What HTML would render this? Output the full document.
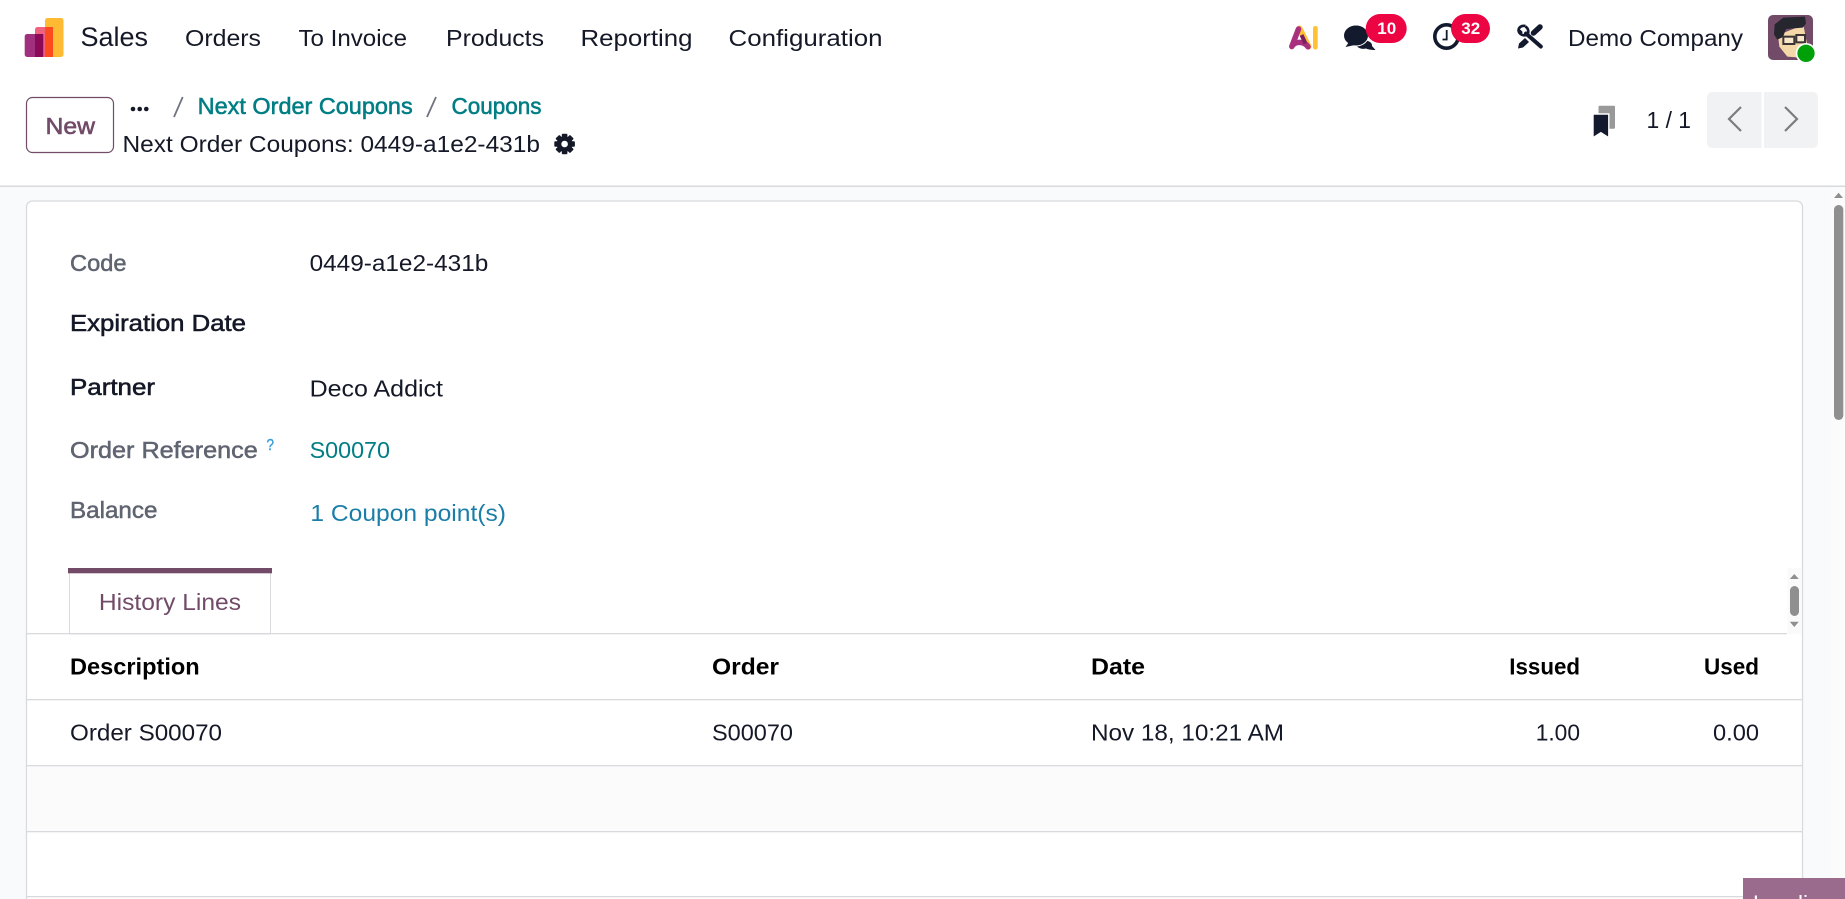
<!DOCTYPE html>
<html lang="en">
<head>
<meta charset="utf-8">
<title>Next Order Coupons: 0449-a1e2-431b</title>
<style>
html,body{margin:0;padding:0;width:1845px;height:899px;overflow:hidden;background:#f9fafb}
svg{position:absolute;left:0;top:0;display:block}
text{font-family:"Liberation Sans",sans-serif;font-size:23px;fill:#141827}
.b{stroke:#141827;stroke-width:.55px}
.g{fill:#5f6470;stroke:#5f6470;stroke-width:.5px}
.t{fill:#017e84}
.bt{fill:#017e84;stroke:#017e84;stroke-width:.55px}
.n{fill:#714B67;stroke:#714B67;stroke-width:.6px}
.k{fill:#000;font-weight:700}
</style>
</head>
<body>
<svg width="1845" height="899" viewBox="0 0 1845 899" xmlns="http://www.w3.org/2000/svg">
  <!-- backgrounds -->
  <rect x="0" y="0" width="1845" height="186" fill="#fff"/>
  <rect x="0" y="185.5" width="1845" height="1.5" fill="#d8dadd"/>
  <rect x="1831" y="187" width="14" height="712" fill="#fbfbfb"/>

  <!-- logo -->
  <rect x="45" y="18" width="18.5" height="39" rx="2.5" fill="#FFBA33"/>
  <rect x="35" y="27" width="18" height="30" rx="2.5" fill="#F0617F"/>
  <rect x="45" y="27" width="8" height="30" fill="#FB4B1F"/>
  <rect x="24.7" y="34" width="18.5" height="23" rx="2.5" fill="#A0307D"/>
  <rect x="35" y="34" width="8.2" height="23" fill="#8B0A56"/>

  <!-- nav -->
  <text x="80.5" y="46" style="font-size:27px" textLength="67.5" lengthAdjust="spacingAndGlyphs">Sales</text>
  <text x="185" y="46" textLength="76" lengthAdjust="spacingAndGlyphs">Orders</text>
  <text x="298.5" y="46" textLength="108.5" lengthAdjust="spacingAndGlyphs">To Invoice</text>
  <text x="446" y="46" textLength="98" lengthAdjust="spacingAndGlyphs">Products</text>
  <text x="580.5" y="46" textLength="112" lengthAdjust="spacingAndGlyphs">Reporting</text>
  <text x="728.5" y="46" textLength="154" lengthAdjust="spacingAndGlyphs">Configuration</text>

  <!-- AI logo -->
  <path d="M1299.5 28.5 L1308.5 46.500" stroke="#FFC233" stroke-width="6" stroke-linecap="round" fill="none"/>
  <path d="M1298.500 29 L1291.800 46.500 C1295 41 1304 41 1308 46.800" stroke="#A8307D" stroke-width="5.500" stroke-linecap="round" stroke-linejoin="round" fill="none"/>
  <path d="M1301.500 35 L1305.500 43.500" stroke="#7a1f5f" stroke-width="4" fill="none"/>
  <rect x="1313" y="26" width="4.7" height="23.5" rx="2.2" fill="#FFC233"/>

  <!-- chat -->
  <path d="M1354 41 C1362 38 1373 41 1372 46 L1375.500 50 C1371 50 1368 49.500 1366 48.500 C1361 50 1355 47 1354 41 Z" fill="#141a2e"/>
  <ellipse cx="1356" cy="35.500" rx="12.500" ry="10.500" fill="#141a2e" stroke="#fff" stroke-width="1"/>
  <path d="M1349 42 L1345.500 47 L1355 45 Z" fill="#141a2e"/>
  <rect x="1365.700" y="14" width="41" height="29" rx="14.500" fill="#EC0443"/>
  <text x="1386.700" y="34" text-anchor="middle" style="font-size:17px;fill:#fff;font-weight:700">10</text>

  <!-- clock -->
  <circle cx="1446.500" cy="36.500" r="11.700" fill="none" stroke="#141a2e" stroke-width="3.600"/>
  <path d="M1446.700 30 V39.500 H1442.500" fill="none" stroke="#141a2e" stroke-width="1.800"/>
  <rect x="1451" y="14" width="39" height="29" rx="14.500" fill="#EC0443"/>
  <text x="1470.700" y="34" text-anchor="middle" style="font-size:17px;fill:#fff;font-weight:700">32</text>

  <!-- tools -->
  <path d="M1526 33.500 L1540.800 46.500" stroke="#141a2e" stroke-width="4" stroke-linecap="round" fill="none"/>
  <path d="M1525.500 26 C1521.500 25 1518.500 27.500 1518.500 30.500 L1521.800 33 L1519.500 30.500 M1518.500 30.500 C1519 34.500 1524 36.500 1527.500 34.500 C1529 32 1528.500 28.500 1525.500 26.500" stroke="#141a2e" stroke-width="2.600" fill="none"/>
  <path d="M1533.500 33 L1540 27" stroke="#141a2e" stroke-width="5.500" stroke-linecap="round" fill="none"/>
  <path d="M1525 38 L1529 42 L1523 47.500 L1518 48.500 L1519 43.500 Z" fill="#141a2e"/>

  <text x="1568" y="46" textLength="175" lengthAdjust="spacingAndGlyphs">Demo Company</text>

  <!-- avatar -->
  <g transform="translate(1750 5) scale(.33333)">
    <rect x="54" y="30" width="135" height="135" rx="15" fill="#714B67"/>
    <path d="M84 90 L160 60 L172 120 L150 158 L112 155 L88 125 Z" fill="#f5d8a8"/>
    <path d="M72 88 L74 58 L100 38 L165 35 L168 56 L158 68 L108 72 L99 96 L82 104 Z" fill="#26262f"/>
    <rect x="100" y="95" width="33" height="22" fill="#f8e6c8" stroke="#3b3436" stroke-width="6"/>
    <rect x="139" y="90" width="26" height="22" fill="#f8e6c8" stroke="#3b3436" stroke-width="6"/>
    <circle cx="168" cy="145" r="31" fill="#fff"/>
    <circle cx="168" cy="145" r="26" fill="#00A009"/>
  </g>

  <!-- control panel -->
  <rect x="26.500" y="97.500" width="87" height="55" rx="6" fill="#fff" stroke="#714B67" stroke-width="1.200"/>
  <text x="45.500" y="134" class="n" textLength="49.500" lengthAdjust="spacingAndGlyphs">New</text>
  <circle cx="133" cy="109" r="2.300" fill="#141827"/><circle cx="139.700" cy="109" r="2.300" fill="#141827"/><circle cx="146.300" cy="109" r="2.300" fill="#141827"/>
  <path d="M182.700 97 L174 117 M436 97 L427 117" stroke="#6f7480" stroke-width="1.800" fill="none"/>
  <text x="197.700" y="114" class="bt" textLength="215" lengthAdjust="spacingAndGlyphs">Next Order Coupons</text>
  <text x="451.500" y="114" class="bt" textLength="90" lengthAdjust="spacingAndGlyphs">Coupons</text>
  <text x="122.500" y="152" textLength="417.500" lengthAdjust="spacingAndGlyphs">Next Order Coupons: 0449-a1e2-431b</text>

  <!-- gear -->
  <g transform="translate(564.600 144)" fill="#141827">
    <rect x="-2.800" y="-10.300" width="5.600" height="20.600" rx="1"/>
    <rect x="-2.800" y="-10.300" width="5.600" height="20.600" rx="1" transform="rotate(45)"/>
    <rect x="-2.800" y="-10.300" width="5.600" height="20.600" rx="1" transform="rotate(90)"/>
    <rect x="-2.800" y="-10.300" width="5.600" height="20.600" rx="1" transform="rotate(135)"/>
    <circle r="7.800"/>
    <circle r="3.300" fill="#fff"/>
  </g>

  <!-- bookmarks -->
  <rect x="1598.500" y="105.700" width="16.500" height="23" rx="1" fill="#999"/>
  <path d="M1593 114 H1608.800 V137.700 L1600.900 132.700 L1593 137.700 Z" fill="#141a2e" stroke="#fff" stroke-width="1.400"/>

  <text x="1646.500" y="128" textLength="44.500" lengthAdjust="spacingAndGlyphs">1 / 1</text>

  <!-- pager -->
  <path d="M1712 92 H1761.500 V148 H1712 a5 5 0 0 1 -5 -5 V97 a5 5 0 0 1 5 -5 Z" fill="#f1f2f4"/>
  <path d="M1764 92 H1813 a5 5 0 0 1 5 5 V143 a5 5 0 0 1 -5 5 H1764 Z" fill="#f1f2f4"/>
  <path d="M1741 107 L1729 119 L1741 131 M1785 107 L1797 119 L1785 131" fill="none" stroke="#7d7d7d" stroke-width="2.200"/>

  <!-- page scrollbar -->
  <path d="M1838.600 192.700 L1843 198 H1834 Z" fill="#8f8f8f"/>
  <rect x="1834" y="205" width="9.300" height="215" rx="4.600" fill="#8f8f8f"/>

  <!-- card -->
  <path d="M26.500 899 V207 a6 6 0 0 1 6 -6 H1796.500 a6 6 0 0 1 6 6 V899" fill="#fff" stroke="#d8dadd" stroke-width="1.300"/>

  <!-- form -->
  <text x="70" y="271" class="g" textLength="56.500" lengthAdjust="spacingAndGlyphs">Code</text>
  <text x="309.600" y="271" textLength="178.700" lengthAdjust="spacingAndGlyphs">0449-a1e2-431b</text>
  <text x="70" y="331" class="b" textLength="176" lengthAdjust="spacingAndGlyphs">Expiration Date</text>
  <text x="70" y="395" class="b" textLength="85" lengthAdjust="spacingAndGlyphs">Partner</text>
  <text x="309.600" y="396.500" textLength="133.400" lengthAdjust="spacingAndGlyphs">Deco Addict</text>
  <text x="70" y="458" class="g" textLength="187.800" lengthAdjust="spacingAndGlyphs">Order Reference</text>
  <text x="266.500" y="450" style="font-size:16px;fill:#3a9ed6;stroke:#3a9ed6;stroke-width:.4px" textLength="7.500" lengthAdjust="spacingAndGlyphs">?</text>
  <text x="309.600" y="458" class="t" textLength="80.400" lengthAdjust="spacingAndGlyphs">S00070</text>
  <text x="70" y="518" class="g" textLength="87.400" lengthAdjust="spacingAndGlyphs">Balance</text>
  <text x="310.400" y="521" style="fill:#1b7ea8" textLength="195.600" lengthAdjust="spacingAndGlyphs">1 Coupon point(s)</text>

  <!-- tab -->
  <rect x="69.500" y="570" width="201" height="64" fill="#fff" stroke="#d8dadd" stroke-width="1"/>
  <rect x="68" y="568" width="204" height="5.300" fill="#714B67"/>
  <text x="98.900" y="610" style="fill:#714B67" textLength="142.100" lengthAdjust="spacingAndGlyphs">History Lines</text>

  <!-- inner scrollbar -->
  <rect x="1787.300" y="568" width="14.500" height="66" fill="#fafafa"/>
  <path d="M1794.300 574 L1798.800 579 H1789.800 Z" fill="#8f8f8f"/>
  <rect x="1790" y="586" width="9" height="30" rx="4.500" fill="#8f8f8f"/>
  <path d="M1794.300 627 L1798.800 621.700 H1789.800 Z" fill="#8f8f8f"/>

  <!-- table -->
  <rect x="27" y="766" width="1775" height="65" fill="#fbfbfb"/>
  <rect x="27" y="633" width="1760" height="1.300" fill="#d8dadd"/>
  <rect x="27" y="699" width="1775" height="1.300" fill="#d8dadd"/>
  <rect x="27" y="765" width="1775" height="1.300" fill="#d8dadd"/>
  <rect x="27" y="831" width="1775" height="1.300" fill="#d8dadd"/>
  <rect x="27" y="896" width="1775" height="1.300" fill="#d8dadd"/>

  <text x="70" y="674.500" class="k" textLength="129.700" lengthAdjust="spacingAndGlyphs">Description</text>
  <text x="712" y="674.500" class="k" textLength="67" lengthAdjust="spacingAndGlyphs">Order</text>
  <text x="1091" y="674.500" class="k" textLength="54" lengthAdjust="spacingAndGlyphs">Date</text>
  <text x="1509.300" y="674.500" class="k" textLength="70.700" lengthAdjust="spacingAndGlyphs">Issued</text>
  <text x="1704" y="674.500" class="k" textLength="55" lengthAdjust="spacingAndGlyphs">Used</text>

  <text x="70" y="740.500" textLength="152" lengthAdjust="spacingAndGlyphs">Order S00070</text>
  <text x="712" y="740.500" textLength="81" lengthAdjust="spacingAndGlyphs">S00070</text>
  <text x="1091" y="740.500" textLength="193" lengthAdjust="spacingAndGlyphs">Nov 18, 10:21 AM</text>
  <text x="1535.700" y="740.500" textLength="44.300" lengthAdjust="spacingAndGlyphs">1.00</text>
  <text x="1713" y="740.500" textLength="46" lengthAdjust="spacingAndGlyphs">0.00</text>

  <!-- loading box -->
  <rect x="1743" y="878" width="102" height="21" fill="#9b6b8d"/>
  <text x="1753" y="911" style="font-size:22.500px;fill:#fff">Loading</text>
</svg>
</body>
</html>
